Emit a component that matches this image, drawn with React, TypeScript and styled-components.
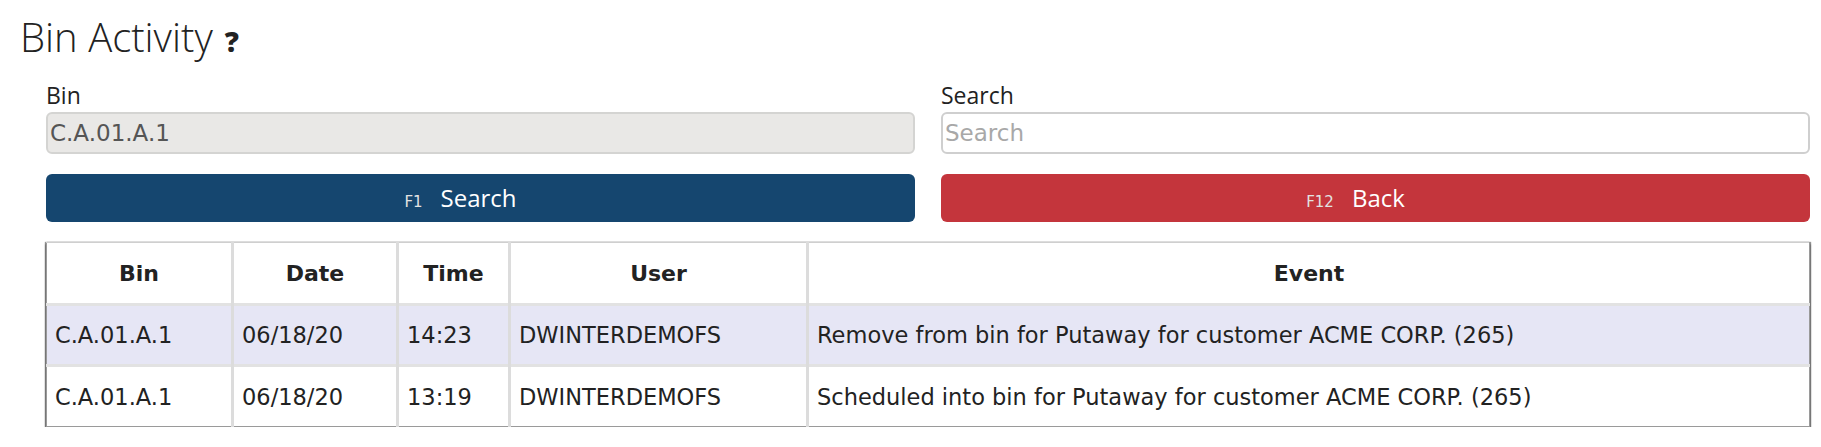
import React from "react";
import styled, { createGlobalStyle } from "styled-components";

const GlobalStyle = createGlobalStyle`
  html, body {
    margin: 0;
    padding: 0;
    background: #ffffff;
    color: #222222;
    font-family: "Open Sans", "DejaVu Sans", sans-serif;
  }
  * { box-sizing: border-box; }
`;

const Page = styled.div`
  padding: 14px 11px 0 20px;
`;

const Title = styled.h1`
  margin: 0 0 22px 0;
  font-family: "Open Sans", sans-serif;
  font-weight: 300;
  font-size: 40px;
  line-height: 46px;
  color: #222222;
`;

const Help = styled.span`
  margin-left: 12px;
  font-family: "Open Sans", sans-serif;
  font-weight: 800;
  font-size: 28px;
  line-height: 1;
  color: #222222;
`;

const Content = styled.div`
  padding-left: 26px;
`;

const FormGrid = styled.div`
  display: grid;
  grid-template-columns: 1fr 1fr;
  column-gap: 26px;
  row-gap: 20px;
`;

const Field = styled.div`
  display: flex;
  flex-direction: column;
  gap: 4px;
`;

const Label = styled.label`
  font-family: "Open Sans", sans-serif;
  font-size: 23px;
  line-height: 26px;
  color: #222222;
`;

const Input = styled.input`
  height: 42px;
  width: 100%;
  border: 2px solid #cfcfcf;
  border-radius: 6px;
  padding: 0 2px;
  font-family: "DejaVu Sans", sans-serif;
  font-size: 23px;
  color: #555555;
  background: #ffffff;
  outline: none;

  &:disabled {
    background: #e9e8e6;
    border-color: #d4d4d2;
    color: #555555;
  }

  &::placeholder {
    color: #a8a8a8;
  }
`;

const ActionButton = styled.button<{ $variant: "primary" | "danger" }>`
  height: 48px;
  width: 100%;
  border: none;
  border-radius: 6px;
  padding: 0 40px 0 0;
  text-align: center;
  line-height: 48px;
  font-family: "Open Sans", sans-serif;
  font-size: 24px;
  color: #ffffff;
  background: ${(p) => (p.$variant === "primary" ? "#15466f" : "#c4353c")};
  cursor: pointer;
`;

const Key = styled.span`
  font-family: "DejaVu Sans", sans-serif;
  font-size: 15px;
  color: #e2e2e2;
  margin-right: 18px;
`;

const Table = styled.table`
  margin-top: 20px;
  width: 100%;
  border-collapse: collapse;
  table-layout: fixed;
  border: 1px solid #9a9a9a;
  border-top-color: #cfcfcf;
  box-shadow: 0 2px 2px rgba(0, 0, 0, 0.7), 1px 0 1px rgba(0, 0, 0, 0.4),
    -1px 0 1px rgba(0, 0, 0, 0.4);
`;

const HeadCell = styled.th`
  height: 62px;
  font-family: "DejaVu Sans", sans-serif;
  font-weight: 700;
  font-size: 22px;
  color: #222222;
  text-align: center;
  border-right: 3px solid #dcdcdc;
  &:last-child { border-right: none; }
`;

const Row = styled.tr<{ $shaded: boolean }>`
  background: ${(p) => (p.$shaded ? "#e6e6f5" : "#ffffff")};
  border-top: 3px solid #e2e2e2;
`;

const Cell = styled.td`
  height: 61px;
  padding: 0 8px;
  font-family: "DejaVu Sans", sans-serif;
  font-size: 22.5px;
  color: #222222;
  white-space: nowrap;
  border-right: 3px solid #dcdcdc;
  &:last-child { border-right: none; }
`;

const columns = [
  { title: "Bin", width: 186 },
  { title: "Date", width: 165 },
  { title: "Time", width: 112 },
  { title: "User", width: 298 },
  { title: "Event", width: undefined as number | undefined },
];

const rows = [
  ["C.A.01.A.1", "06/18/20", "14:23", "DWINTERDEMOFS", "Remove from bin for Putaway for customer ACME CORP. (265)"],
  ["C.A.01.A.1", "06/18/20", "13:19", "DWINTERDEMOFS", "Scheduled into bin for Putaway for customer ACME CORP. (265)"],
];

export default function App() {
  return (
    <>
      <GlobalStyle />
      <Page>
        <Title>
          Bin Activity<Help>?</Help>
        </Title>
        <Content>
          <FormGrid>
            <Field>
              <Label>Bin</Label>
              <Input disabled value="C.A.01.A.1" readOnly />
            </Field>
            <Field>
              <Label>Search</Label>
              <Input placeholder="Search" />
            </Field>
            <ActionButton $variant="primary">
              <Key>F1</Key>Search
            </ActionButton>
            <ActionButton $variant="danger">
              <Key>F12</Key>Back
            </ActionButton>
          </FormGrid>
          <Table>
            <colgroup>
              {columns.map((c) => (
                <col key={c.title} style={c.width ? { width: c.width } : undefined} />
              ))}
            </colgroup>
            <thead>
              <tr>
                {columns.map((c) => (
                  <HeadCell key={c.title}>{c.title}</HeadCell>
                ))}
              </tr>
            </thead>
            <tbody>
              {rows.map((r, i) => (
                <Row key={i} $shaded={i % 2 === 0}>
                  {r.map((v, j) => (
                    <Cell key={j}>{v}</Cell>
                  ))}
                </Row>
              ))}
            </tbody>
          </Table>
        </Content>
      </Page>
    </>
  );
}
